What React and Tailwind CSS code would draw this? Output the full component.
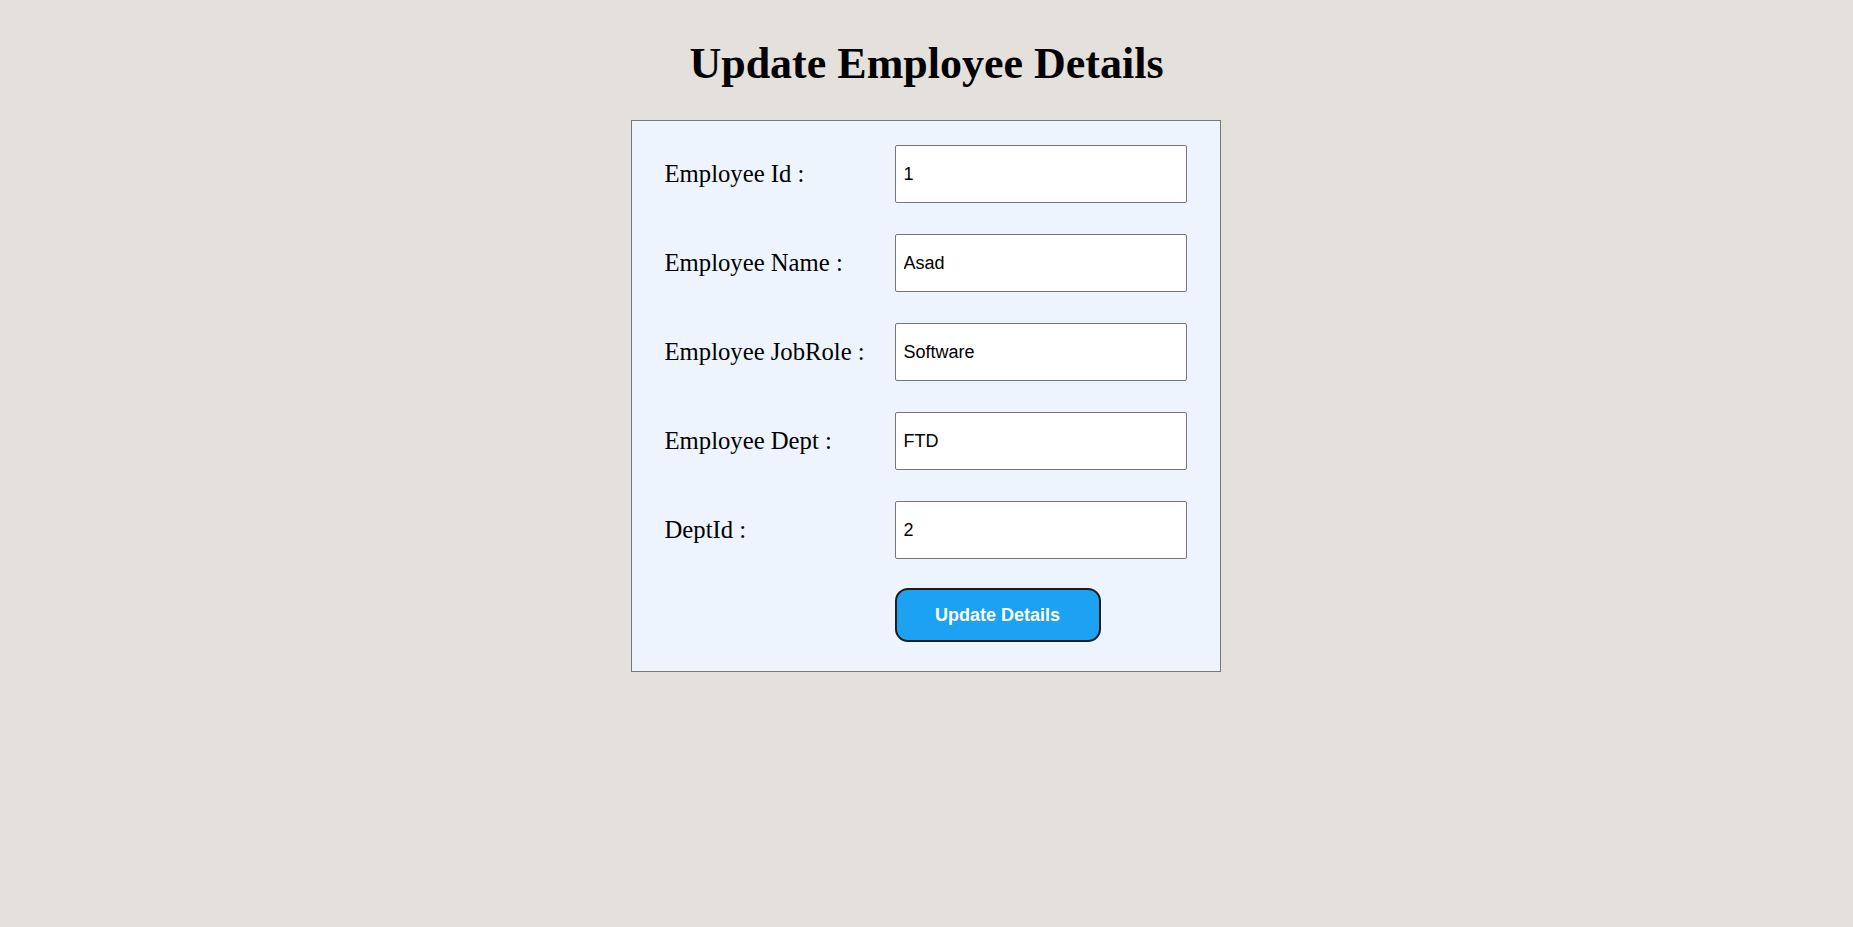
import React, { useState } from "react";

const fields = [
  { key: "id", label: "Employee Id :", value: "1" },
  { key: "name", label: "Employee Name :", value: "Asad" },
  { key: "role", label: "Employee JobRole :", value: "Software" },
  { key: "dept", label: "Employee Dept :", value: "FTD" },
  { key: "deptId", label: "DeptId :", value: "2" },
];

const App = () => {
  const [form, setForm] = useState(
    Object.fromEntries(fields.map((f) => [f.key, f.value]))
  );

  return (
    <div className="min-h-screen w-full bg-[#e4e0db] flex flex-col items-center font-['Liberation_Serif',serif] text-black">
      {/* heading */}
      <h1 className="pt-[42px] mb-[34px] text-[44px] leading-none font-bold">
        Update Employee Details
      </h1>

      {/* form card */}
      <form
        onSubmit={(e) => e.preventDefault()}
        className="w-[590px] mr-[2px] bg-[#edf4fe] border border-[#777777] px-[33px] pt-[24px] pb-[29px] flex flex-col">
        <div className="flex flex-col gap-[31px]">
          {fields.map((f) => (
            <div key={f.key} className="grid grid-cols-[230px_1fr] items-center">
              <label htmlFor={f.key} className="text-[24.7px] leading-none">
                {f.label}
              </label>
              <input
                id={f.key}
                type="text"
                value={form[f.key]}
                onChange={(e) => setForm({ ...form, [f.key]: e.target.value })}
                className="h-[58px] w-full bg-white border border-[#767676] rounded-[2px] px-[8px] text-[18px] font-['Liberation_Sans',Arial,sans-serif] text-black outline-none"
              />
            </div>
          ))}
        </div>

        <div className="grid grid-cols-[230px_1fr] mt-[29px]">
          <div />
          <button
            type="submit"
            className="h-[54px] w-[206px] bg-[#1da1f2] border-2 border-[#1c1c1c] rounded-[13px] text-white text-[18px] font-bold font-['Liberation_Sans',Arial,sans-serif]">
            Update Details
          </button>
        </div>
      </form>
    </div>
  );
};

export default App;
